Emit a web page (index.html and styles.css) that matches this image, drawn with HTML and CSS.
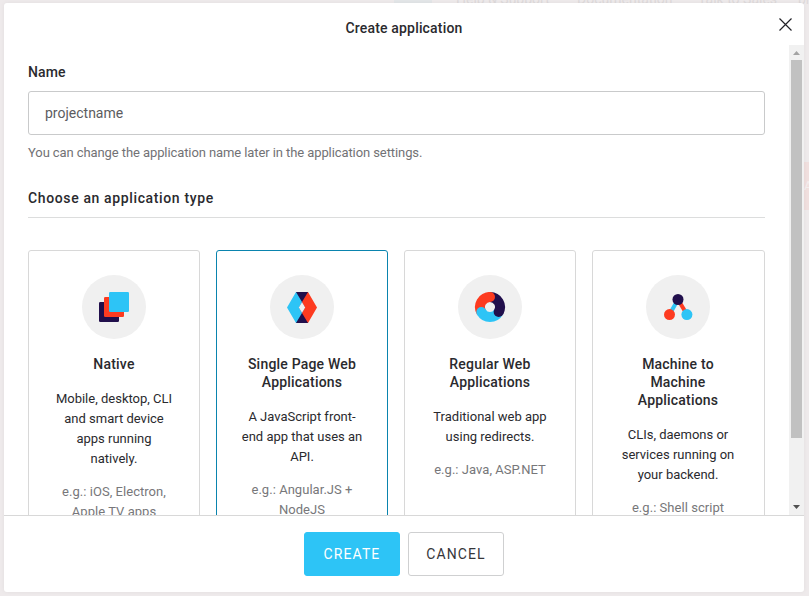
FILE: index.html
```html
<!DOCTYPE html>
<html lang="en">
<head>
<meta charset="utf-8">
<title>Create application</title>
<link rel="stylesheet" href="styles.css">
</head>
<body>
<nav class="page-nav"><span class="nav-search"></span><span class="nav-help">Help &amp; Support</span><span class="nav-docs">Documentation</span><span class="nav-sales">Talk to Sales</span><span>pr</span></nav>
<div class="page-action">A</div>
<main class="modal">
  <header class="modal-header">
    <h1>Create application</h1>
    <svg class="close" width="15" height="15" viewBox="0 0 15 15"><path d="M1.500 1.500l12 12M13.500 1.500l-12 12"/></svg>
  </header>
  <div class="modal-body">
    <div class="content">
      <label class="label" for="name">Name</label>
      <input class="field" id="name" value="projectname">
      <p class="hint">You can change the application name later in the application settings.</p>
      <h2>Choose an application type</h2>
      <div class="cards">
        <section class="card">
          <div class="icon"><svg width="32" height="32" viewBox="0 0 32 32"><rect class="navy" x="1" y="11" width="20" height="20" rx="1.3"/><rect class="red" x="6" y="6" width="20" height="20" rx="1.3"/><rect class="blue" x="11" y="1" width="20" height="20" rx="1.3"/></svg></div>
          <h3>Native</h3>
          <p class="desc">Mobile, desktop, CLI<br>and smart device<br>apps running<br>natively.</p>
          <p class="example">e.g.: iOS, Electron,<br>Apple TV apps</p>
        </section>
        <section class="card selected">
          <div class="icon"><svg width="32" height="32" viewBox="0 0 32 32"><path class="navy" d="M10 1h12v31H10z"/><path class="blue" d="M10 1l6 10-3 5.5 3 5.5-6 10-9-15.500z"/><path class="red" d="M22 1l-6 10 3 5.500-3 5.500 6 10 9-15.500z"/><path class="hole" d="M16 11l3.200 5.500L16 22l-3.200-5.500z"/></svg></div>
          <h3>Single Page Web<br>Applications</h3>
          <p class="desc">A JavaScript front-<br>end app that uses an<br>API.</p>
          <p class="example">e.g.: Angular.JS +<br>NodeJS</p>
        </section>
        <section class="card">
          <div class="icon"><svg width="32" height="32" viewBox="0 0 32 32"><path class="ring navy-ring" d="M16 6a10 10 0 0 1 8.660 15"/><path class="ring blue-ring" d="M24.660 21a10 10 0 0 1-17.320 0"/><path class="ring red-ring" d="M7.340 21A10 10 0 0 1 16 6"/><circle class="red" cx="16" cy="6" r="5"/><circle class="navy" cx="24.660" cy="21" r="5"/><circle class="blue" cx="7.340" cy="21" r="5"/></svg></div>
          <h3>Regular Web<br>Applications</h3>
          <p class="desc">Traditional web app<br>using redirects.</p>
          <p class="example">e.g.: Java, ASP.NET</p>
        </section>
        <section class="card last">
          <div class="icon"><svg width="32" height="32" viewBox="0 0 32 32"><path class="blue-line" d="M16 8.500L7.500 23.500"/><path class="red-line" d="M16 8.500l9 15"/><circle class="navy" cx="16" cy="8.500" r="5.500"/><circle class="red" cx="7.500" cy="23.600" r="5.500"/><circle class="blue" cx="24.900" cy="23.600" r="5.500"/></svg></div>
          <h3>Machine to<br>Machine<br>Applications</h3>
          <p class="desc">CLIs, daemons or<br>services running on<br>your backend.</p>
          <p class="example">e.g.: Shell script</p>
        </section>
      </div>
    </div>
    <div class="scrollbar">
      <svg width="15" height="15" viewBox="0 0 15 15"><path fill="#a3a3a3" d="M4 10l3.500-4L11 10z"/></svg>
      <div class="thumb"></div>
      <svg class="down" width="15" height="15" viewBox="0 0 15 15"><path fill="#505050" d="M4 5h7L7.500 9z"/></svg>
    </div>
  </div>
  <footer class="modal-footer">
    <button class="btn primary">CREATE</button>
    <button class="btn">CANCEL</button>
  </footer>
</main>
</body>
</html>
```
FILE: styles.css
```css
* { box-sizing: border-box; }
body {
  margin: 0;
  height: 596px;
  padding: 3px 5px 4px 4px;
  overflow: hidden;
  position: relative;
  background: #eeeaeb;
  color: #2a2a2e;
  font-family: Roboto, "Liberation Sans", sans-serif;
  font-size: 13px;
}
h1, h2, h3, p { margin: 0; font-weight: 500; }
.page-nav {
  position: absolute;
  top: -11px;
  left: 394px;
  display: flex;
  color: #dedadb;
  font-size: 14px;
  line-height: 20px;
  white-space: nowrap;
}
.nav-search { width: 38px; height: 14px; margin-right: 24px; background: #e3e6e8; }
.nav-help { width: 121px; }
.nav-docs { width: 121px; }
.nav-sales { width: 100px; }
.page-action {
  position: absolute;
  top: 162px;
  right: 0;
  width: 5px;
  height: 48px;
  background: #f0dfde;
  color: #f4eeee;
  line-height: 48px;
  overflow: hidden;
}
.modal {
  position: relative;
  display: flex;
  flex-direction: column;
  width: 800px;
  height: 589px;
  background: #fff;
  border-radius: 3px;
  box-shadow: 0 0 4px rgba(0, 0, 0, .05);
  overflow: hidden;
}
.modal-header { height: 42px; flex: none; padding-top: 15px; text-align: center; }
h1 { font-size: 14px; line-height: 20px; letter-spacing: .17px; }
.close { position: absolute; top: 14px; right: 11px; fill: none; stroke: #222228; stroke-width: 1.200; }
.modal-body { height: 470px; flex: none; display: flex; overflow: hidden; }
.content { flex: 1; padding: 17px 24px 0; }
.label { display: block; font-size: 14px; line-height: 20px; font-weight: 500; letter-spacing: .14px; }
.field {
  display: block;
  width: 100%;
  height: 44px;
  margin-top: 9px;
  padding: 0 16px;
  border: 1px solid #c9cacb;
  border-radius: 3px;
  background: #fff;
  color: #5c5c60;
  font: 14px Roboto, "Liberation Sans", sans-serif;
  letter-spacing: 0;
  outline: 0;
}
.hint { margin-top: 8px; line-height: 20px; font-weight: 400; color: #727275; letter-spacing: -.090px; }
h2 {
  height: 30px;
  margin-top: 25px;
  border-bottom: 1px solid #dcdddd;
  font-size: 14px;
  line-height: 20px;
  letter-spacing: .63px;
}
.cards { display: grid; grid-template-columns: 172px 172px 172px 173px; gap: 16px; margin-top: 32px; }
.card { height: 340px; padding-top: 24px; border: 1px solid #d8d8d8; border-radius: 3px; text-align: center; white-space: nowrap; }
.card.selected { border-color: #0a84ae; }
.last { padding-right: 1px; }
.icon { display: flex; align-items: center; justify-content: center; width: 64px; height: 64px; margin: 0 auto 16px; border-radius: 50%; background: #f0f0f0; }
h3 { font-size: 14px; line-height: 18px; letter-spacing: .2px; }
.desc, .example { line-height: 20px; font-weight: 400; }
.desc { margin-top: 16px; }
.example { margin-top: 13px; color: #77777a; letter-spacing: .040px; }
.navy { fill: #210f4c; }
.red { fill: #fd3b20; }
.blue { fill: #2dc4f6; }
.hole { fill: #f0f0f0; }
.ring { fill: none; stroke-width: 10; }
.navy-ring { stroke: #210f4c; }
.blue-ring { stroke: #2dc4f6; }
.red-ring { stroke: #fd3b20; }
.blue-line { stroke: #2dc4f6; stroke-width: 4; }
.red-line { stroke: #fd3b20; stroke-width: 4; }
.scrollbar { display: flex; flex-direction: column; align-items: center; width: 15px; background: #f1f1f1; }
.scrollbar svg { flex: none; }
.thumb { width: 11px; height: 378px; background: #c1c1c1; }
.down { margin-top: auto; }
.modal-footer { display: flex; justify-content: center; gap: 8px; height: 77px; padding-top: 16px; border-top: 1px solid #d8d8d8; }
.btn {
  width: 96px;
  height: 44px;
  padding: 0;
  border: 1px solid #cfd0d1;
  border-radius: 3px;
  background: #fff;
  color: #36363a;
  font: 400 14px Roboto, "Liberation Sans", sans-serif;
  letter-spacing: 1.100px;
}
.primary { border-color: #2dc4f6; background: #2dc4f6; color: #fff; }
```
